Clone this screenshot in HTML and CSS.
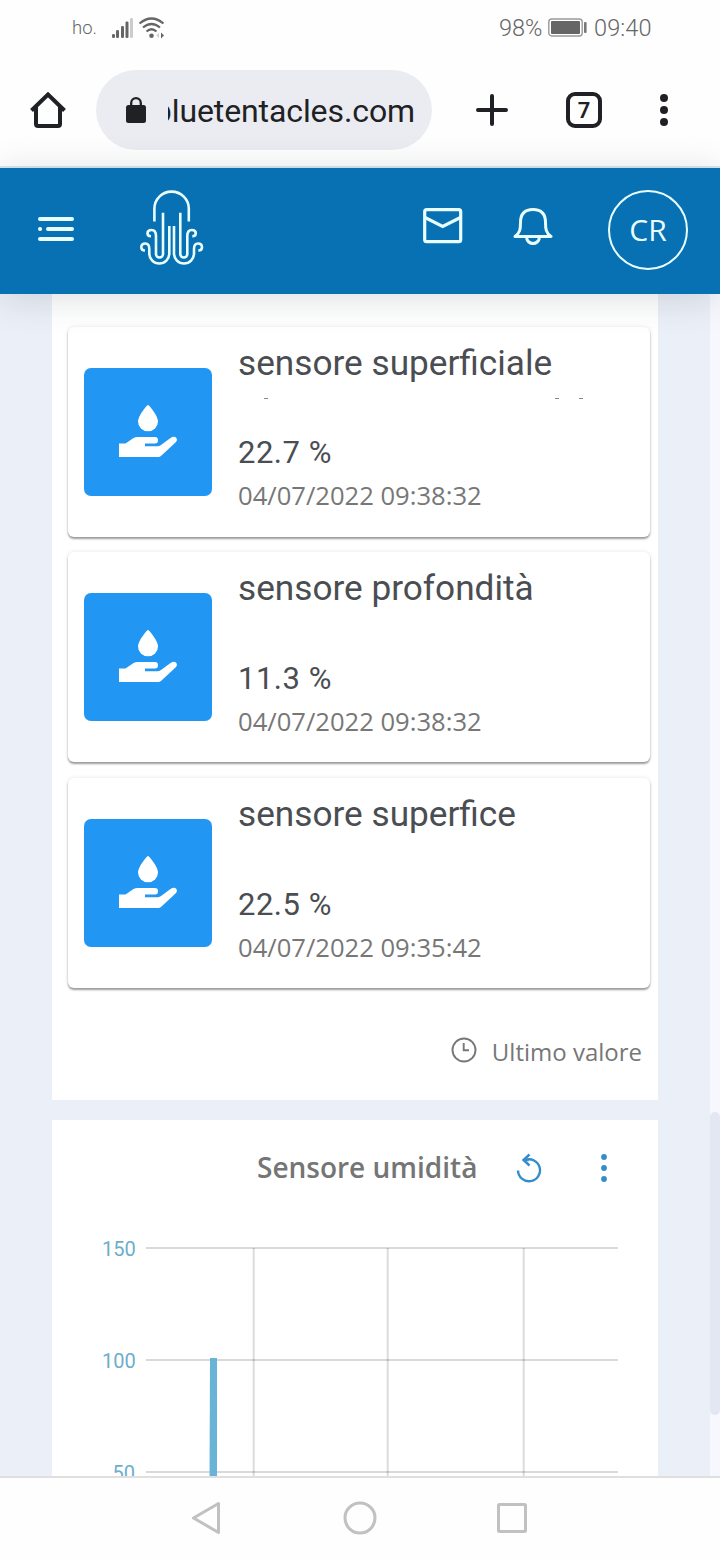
FILE: index.html
```html
<!DOCTYPE html>
<html lang="it">
<head>
<meta charset="utf-8">
<title>Bluetentacles</title>
<link rel="stylesheet" href="styles.css">
</head>
<body>
<div class="status">
  <span class="carrier">ho.</span>
  <svg class="radio" width="54" height="24" viewBox="0 0 54 24" fill="#666">
    <rect x="1" y="17" width="3" height="4" rx="1.2"/><rect x="5" y="13" width="3" height="8" rx="1.2"/><rect x="10" y="9" width="3" height="12" rx="1.2"/><rect x="14.500" y="4.500" width="3" height="16.500" rx="1.2"/><rect x="19" y="1" width="3" height="20" rx="1.2" fill="#ccc"/>
    <g fill="none" stroke="#666" stroke-width="2.2"><path d="M28.500 6.500Q40.500-3.500 52.500 6.500"/><path d="M32 10.500Q40.500 3.500 49 10.500"/><path d="M35.500 14.500Q40.500 10 45.500 14.500"/></g>
    <circle cx="40.500" cy="18.800" r="2.300"/><path d="M50 15.500l3 3-3 3z"/><path d="M48 16l-2.500 2.500 2.500 2.500z" fill="#ccc"/>
  </svg>
  <span class="battery-text">98%</span>
  <svg class="battery" width="40" height="20" viewBox="0 0 40 20"><rect x=".8" y="1" width="33.400" height="17" rx="3" fill="#fff" stroke="#999" stroke-width="1.400"/><rect x="3" y="3" width="29" height="13" rx="1" fill="#666"/><rect x="36" y="4" width="2.600" height="11" rx="1" fill="#777"/></svg>
  <span class="clock">09:40</span>
</div>
<div class="browser">
  <svg class="home" width="36" height="36" viewBox="0 0 36 36" fill="none" stroke="#202124" stroke-width="4"><path d="M6 15V32Q6 34 8 34H28Q30 34 30 32V15" /><path d="M1.500 18.500 18 2.500 34.500 18.500" stroke-linejoin="miter"/></svg>
  <div class="address">
    <svg width="20" height="26" viewBox="0 0 20 26"><rect y="8" width="20" height="18" rx="2.500" fill="#202124"/><path d="M5.200 9V6a4.800 4.800 0 0 1 9.600 0V9" fill="none" stroke="#202124" stroke-width="2.300"/></svg>
    <div class="url"><span>bluetentacles.com</span></div>
  </div>
  <svg class="plus" width="32" height="32" viewBox="0 0 32 32" stroke="#202124" stroke-width="4" stroke-linecap="round"><path d="M2 16H30M16 2V30"/></svg>
  <div class="tabs">7</div>
  <svg class="kebab" width="8" height="32" viewBox="0 0 8 32" fill="#202124"><circle cx="4" cy="4" r="4"/><circle cx="4" cy="16" r="4"/><circle cx="4" cy="28" r="4"/></svg>
</div>
<header class="header">
  <svg class="menu" width="36" height="24" viewBox="0 0 36 24" stroke="#e8feff" stroke-width="4" stroke-linecap="round"><path d="M2 2H34M2 12h.1M10 12H34M2 22H34"/></svg>
  <svg class="logo" width="64" height="76" viewBox="0 0 64 76" fill="none" stroke="#e8feff" stroke-width="2.600">
    <path d="M14.400 31.500V18.800a17.200 17.200 0 0 1 34.400 0V31.500"/>
    <g id="arms"><path d="M23 22.700V64a3.500 3.500 0 0 1-7 0V46c0-4-1.500-6-4.500-6q-4 0-4 3.200 0 3 3.500 3"/><path d="M29.300 36V63.500a10 10 0 0 1-20 0V59c0-3.500-1.300-5.500-4-5.500-2.600 0-4 1.500-4 3.700q0 3.300 3.700 3.300"/></g>
    <use href="#arms" transform="translate(63.300 0) scale(-1 1)"/>
  </svg>
  <svg class="mail" width="40" height="36" viewBox="0 0 40 36" fill="none" stroke="#e8feff" stroke-width="3.200"><rect x="1.700" y="1.700" width="36" height="32" rx="2"/><path d="M2 9.500 19.700 18.500 37.500 9.500"/></svg>
  <svg class="bell" width="40" height="40" viewBox="0 0 40 40" fill="none" stroke="#e8feff" stroke-width="3" stroke-linejoin="round"><path d="M2 29.500C7 26 7.500 22 7.500 15.500 7.500 6.500 12 2.500 20 2.500S32.500 6.500 32.500 15.500C32.500 22 33 26 38 29.500Z"/><path d="M13.500 31q1.500 5.500 6.500 5.500t6.500-5.500"/></svg>
  <div class="avatar">CR</div>
</header>
<main class="main">
  <div class="content">
    <section class="panel">
      <article class="card">
        <div class="tile"><svg width="60" height="54" viewBox="0 0 60 54" fill="#fff"><path d="M30 1c1.200 0 10 11 10 16.500a10 9.800 0 0 1-20 0C20 12 28.800 1 30 1z"/><path d="M1 39.500H7.500L15.500 34q2-1 4-1H37q3 0 3 3.200T37 39.500H27V42.300H40Q42 42 43 41L52.500 34Q56 31.500 58.200 33.700 60 36 57.500 38.600L43.500 51.500Q42 53 40 53H1z"/></svg></div>
        <div class="info"><h2>sensore superficiale</h2><div class="clip"><i></i><i></i><i></i></div><strong>22.7 %</strong><time>04/07/2022 09:38:32</time></div>
      </article>
      <article class="card">
        <div class="tile"><svg width="60" height="54" viewBox="0 0 60 54" fill="#fff"><path d="M30 1c1.200 0 10 11 10 16.500a10 9.800 0 0 1-20 0C20 12 28.800 1 30 1z"/><path d="M1 39.500H7.500L15.500 34q2-1 4-1H37q3 0 3 3.200T37 39.500H27V42.300H40Q42 42 43 41L52.500 34Q56 31.500 58.200 33.700 60 36 57.500 38.600L43.500 51.500Q42 53 40 53H1z"/></svg></div>
        <div class="info"><h2>sensore profondità</h2><div class="clip"></div><strong>11.3 %</strong><time>04/07/2022 09:38:32</time></div>
      </article>
      <article class="card">
        <div class="tile"><svg width="60" height="54" viewBox="0 0 60 54" fill="#fff"><path d="M30 1c1.200 0 10 11 10 16.500a10 9.800 0 0 1-20 0C20 12 28.800 1 30 1z"/><path d="M1 39.500H7.500L15.500 34q2-1 4-1H37q3 0 3 3.200T37 39.500H27V42.300H40Q42 42 43 41L52.500 34Q56 31.500 58.200 33.700 60 36 57.500 38.600L43.500 51.500Q42 53 40 53H1z"/></svg></div>
        <div class="info"><h2>sensore superfice</h2><div class="clip"></div><strong>22.5 %</strong><time>04/07/2022 09:35:42</time></div>
      </article>
      <footer class="last">
        <svg width="26" height="26" viewBox="0 0 26 26" fill="none" stroke="#777" stroke-width="1.900"><circle cx="13" cy="13" r="11.500"/><path d="M12.700 6V13.200H18"/></svg>
        <span>Ultimo valore</span>
      </footer>
    </section>
    <section class="panel chart-panel">
      <div class="chart-head">
        <h3>Sensore umidità</h3>
        <svg class="reload" width="26" height="30" viewBox="0 0 26 30" fill="none" stroke="#348dcb" stroke-width="2.400"><path d="M2 17.500A11 11 0 1 0 9 7H13"/><path d="M13.500 1.500 7.500 7 13.500 12.500"/></svg>
        <svg class="dots" width="6" height="28" viewBox="0 0 6 28" fill="#348dcb"><circle cx="3" cy="3" r="2.900"/><circle cx="3" cy="14" r="2.900"/><circle cx="3" cy="25" r="2.900"/></svg>
      </div>
      <div class="chart">
        <div class="axis"><span>150</span><span>100</span><span>50</span></div>
        <svg width="472" height="240" viewBox="0 0 472 240" fill="#000">
          <g fill-opacity=".15"><rect y="1" width="472" height="2"/><rect y="113" width="472" height="2"/><rect y="225" width="472" height="2"/></g>
          <g fill-opacity=".14"><rect x="106.700" y="2" width="2" height="238"/><rect x="240.700" y="2" width="2" height="238"/><rect x="376.700" y="2" width="2" height="238"/></g>
          <path d="M64 112h7v128h-7.500z" fill="#69b3d7"/>
        </svg>
      </div>
    </section>
  </div>
  <div class="scroll"><div class="thumb"></div></div>
</main>
<nav class="nav">
  <svg width="30" height="34" viewBox="0 0 30 34"><path d="M27.500 2.500V31.500L2.500 17Z"/></svg>
  <svg width="34" height="34" viewBox="0 0 34 34"><circle cx="17" cy="17" r="15"/></svg>
  <svg width="30" height="30" viewBox="0 0 30 30"><rect x="1.500" y="1.500" width="27" height="27" rx="1"/></svg>
</nav>
</body>
</html>
```

FILE: styles.css
```css
* { box-sizing: border-box; margin: 0; padding: 0; }
svg { display: block; flex: none; }
body { width: 720px; height: 1560px; overflow: hidden; display: flex; flex-direction: column; background: #fefefe; font-family: Roboto, sans-serif; }

.status { height: 56px; flex: none; display: flex; align-items: center; padding-left: 72px; color: #666; font-size: 23.500px; }
.carrier { width: 39px; font-size: 18.500px; font-weight: 300; }
.battery-text { margin-left: 334px; width: 49px; font-weight: 300; }
.radio { margin-top: 1px; }
.clock { margin-left: 6px; font-weight: 300; letter-spacing: .1px; }

.browser { height: 112px; flex: none; display: flex; align-items: center; padding-left: 30px; border-bottom: 2px solid #d9e6f0; color: #202124; }
.address { width: 336px; height: 80px; margin: 0 44px 0 30px; border-radius: 40px; background: #ebecf1; display: flex; align-items: center; padding-left: 30px; gap: 22px; }
.home, .address, .plus, .tabs, .kebab { margin-top: -2px; }
.url { width: 247px; overflow: hidden; display: flex; justify-content: flex-end; font-size: 32px; letter-spacing: -.1px; line-height: 44px; padding-top: 2px; }
.tabs { width: 36px; height: 36px; margin-left: 58px; margin-right: 58px; border: 4px solid #202124; border-radius: 9px; font-size: 22px; line-height: 29px; font-weight: 600; text-align: center; }

.header { position: relative; z-index: 1; height: 126px; flex: none; display: flex; align-items: center; padding-left: 38px; background: #0871b4; box-shadow: 0 4px 34px rgba(50, 60, 70, .17); }
.menu { margin-top: -4px; }
.logo { margin: -6px 219px 0 66px; }
.mail { margin: -10px 50px 0 0; }
.bell { margin-top: -9px; }
.avatar { width: 80px; height: 80px; margin: -2px 0 0 55px; border: 2px solid #e8feff; border-radius: 50%; color: #e8feff; font: 30px/75px "Open Sans", sans-serif; text-align: center; }

.main { flex: 1; min-height: 0; overflow: hidden; display: grid; grid-template-columns: 658px 10px; justify-content: space-between; background: #ebeff7; }
.content { padding-left: 52px; display: flex; flex-direction: column; gap: 20px; }
.panel { background: #fff; height: 806px; padding: 32.500px 8px 0 16px; display: flex; flex-direction: column; gap: 15.650px; flex: none; }
.card { height: 210px; flex: none; display: flex; gap: 26px; padding-left: 16px; border-radius: 6px; background: #fff; box-shadow: 0 2px 2px rgba(0, 0, 0, .36), 0 0 4px rgba(0, 0, 0, .1); }
.tile { width: 128px; height: 128px; margin-top: 41.300px; border-radius: 7px; background: #2196f3; display: flex; justify-content: center; padding-top: 36px; }
.info { padding-top: 14.300px; display: flex; flex-direction: column; color: #4a4d52; }
.info h2 { font-size: 35.200px; font-weight: 400; line-height: 44px; white-space: nowrap; }
.clip { height: 14px; margin-bottom: 32.600px; padding-left: 26px; display: flex; align-items: flex-end; }
.clip i { width: 4px; height: 1px; background: #888; }
.clip i:nth-child(2) { margin-left: 287px; }
.clip i:nth-child(3) { margin-left: 20px; }
.info strong { font-size: 31px; font-weight: 400; line-height: 44px; letter-spacing: .5px; }
.info time { font: 25.600px/42px "Open Sans", sans-serif; color: #777; }
.last { flex: none; display: flex; align-items: center; justify-content: flex-end; gap: 15px; height: 44px; margin-top: 25.300px; padding: 3px 8px 0 0; color: #777; font: 24px/36px "Open Sans", sans-serif; }
.last svg { margin-top: -4px; }

.chart-panel { height: 380px; padding: 24px 40px 0 50px; gap: 0; }
.chart-head { flex: none; display: flex; align-items: center; height: 48px; padding-left: 155px; color: #757575; }
.chart-head h3 { width: 259px; font: 600 28px/46px "Open Sans", sans-serif; white-space: nowrap; margin-top: -2px; }
.reload { margin-top: -1px; }
.dots { margin-left: 59px; }
.chart { flex: none; margin-top: 54px; display: flex; gap: 11px; }
.axis { width: 33px; display: flex; flex-direction: column; color: #6caecc; font-size: 20px; text-align: right; }
.axis span { height: 112px; line-height: 6px; }
.scroll { background: #f7f8fe; padding-top: 818px; }
.thumb { height: 303px; border-radius: 5px; background: #e3e7f1; }

.nav { height: 84px; flex: none; border-top: 2px solid #dfdfdf; display: flex; align-items: center; padding: 0 0 2px 191px; }
.nav svg { fill: none; stroke: #c1c1c1; stroke-width: 3px; stroke-linejoin: round; margin-right: 122px; }
.nav svg:nth-child(2) { margin-right: 120px; }
```
